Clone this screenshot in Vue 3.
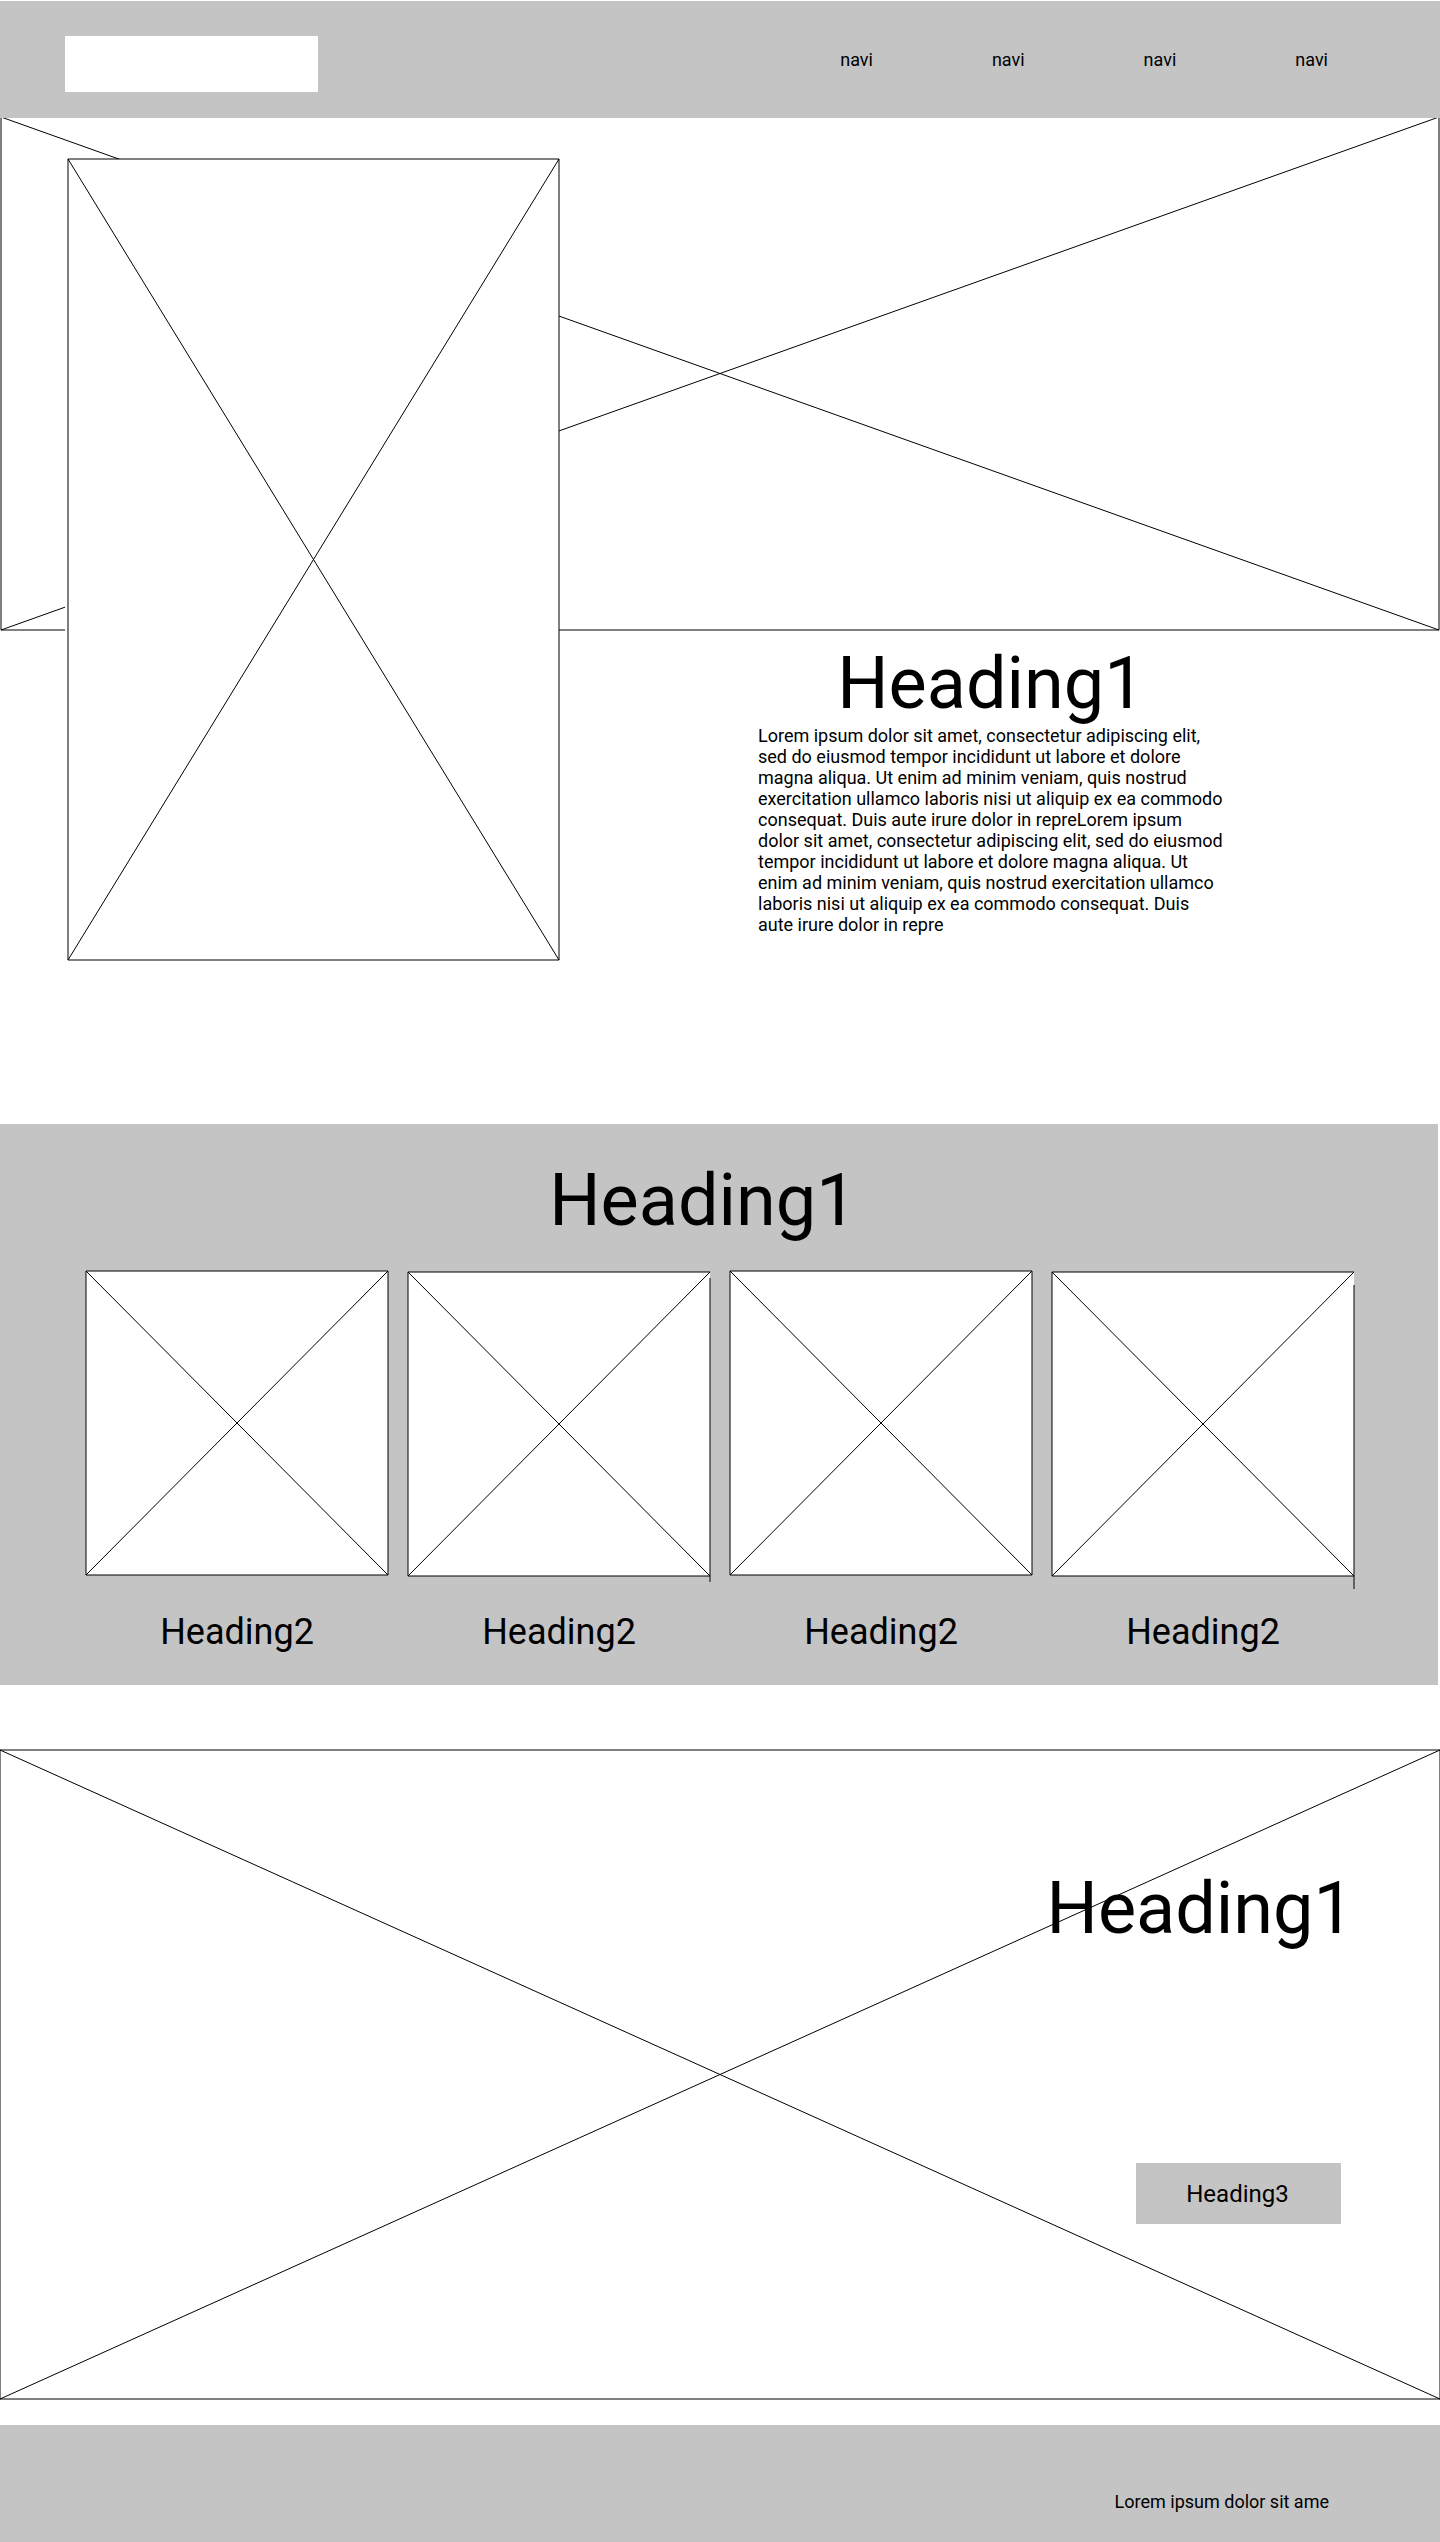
<script setup>
import { h } from 'vue'

const navItems = ['navi', 'navi', 'navi', 'navi']

// shift: vertical offset of the whole drawing; edge: offset of its right side
const tiles = [
  { label: 'Heading2', shift: 0, edge: 0 },
  { label: 'Heading2', shift: 1, edge: 7 },
  { label: 'Heading2', shift: 0, edge: 0 },
  { label: 'Heading2', shift: 1, edge: 14 },
]

const intro =
  'Lorem ipsum dolor sit amet, consectetur adipiscing elit, sed do eiusmod tempor incididunt ut labore et dolore magna aliqua. Ut enim ad minim veniam, quis nostrud exercitation ullamco laboris nisi ut aliquip ex ea commodo consequat. Duis aute irure dolor in repreLorem ipsum dolor sit amet, consectetur adipiscing elit, sed do eiusmod tempor incididunt ut labore et dolore magna aliqua. Ut enim ad minim veniam, quis nostrud exercitation ullamco laboris nisi ut aliquip ex ea commodo consequat. Duis aute irure dolor in repre'

const line = (x1, y1, x2, y2) => h('line', { x1, y1, x2, y2 })

// Crossed image placeholder that stretches to the size of its box
const CrossFrame = (props) =>
  h('svg', { width: '100%', height: '100%', overflow: 'visible', stroke: '#000', 'aria-hidden': 'true' }, [
    h('svg', { y: props.shift, width: '100%', height: '100%', overflow: 'visible' }, [
      h('rect', { width: '100%', height: '100%', fill: '#fff', stroke: 'none' }),
      line('0', '0', '100%', '0'),
      line('0', '100%', '100%', '100%'),
      line('0', '0', '0', '100%'),
      line('0', '0', '100%', '100%'),
      line('100%', '0', '0', '100%'),
    ]),
    h('svg', { y: props.edge, width: '100%', height: '100%', overflow: 'visible' }, [
      line('100%', '0', '100%', '100%'),
    ]),
  ])
CrossFrame.props = { shift: { default: 0 }, edge: { default: 0 } }
</script>

<template>
  <div class="page">
    <header class="header">
      <div class="logo"></div>
      <nav class="nav">
        <a v-for="(item, i) in navItems" :key="i" href="#">{{ item }}</a>
      </nav>
    </header>

    <main>
      <section class="hero">
        <div class="hero-backdrop"><CrossFrame /></div>
        <div class="hero-card"><CrossFrame /></div>
        <div class="hero-text">
          <h1>Heading1</h1>
          <p>{{ intro }}</p>
        </div>
      </section>

      <section class="gallery">
        <h1>Heading1</h1>
        <div class="tiles">
          <article v-for="(tile, i) in tiles" :key="i" class="tile">
            <div class="tile-image"><CrossFrame :shift="tile.shift" :edge="tile.edge" /></div>
            <h2>{{ tile.label }}</h2>
          </article>
        </div>
      </section>

      <section class="banner">
        <div class="banner-image"><CrossFrame /></div>
        <div class="banner-content">
          <h1>Heading1</h1>
          <button type="button">Heading3</button>
        </div>
      </section>
    </main>

    <footer class="footer">
      <p>Lorem ipsum dolor sit ame</p>
    </footer>
  </div>
</template>

<style>
body {
  margin: 0;
  background: #fff;
}
</style>

<style scoped>
.page {
  overflow: hidden;
  padding-top: 1px;
  color: #000;
  font-family: Roboto, sans-serif;
  font-size: 18px;
  line-height: 21px;
}

.page :deep(svg) {
  display: block;
}

h1,
h2,
p {
  margin: 0;
  font-weight: 400;
}

h1 {
  font-size: 72px;
  line-height: 84px;
}

h2 {
  font-size: 36px;
  line-height: 42px;
}

.header {
  position: relative;
  z-index: 1;
  display: flex;
  justify-content: space-between;
  align-items: flex-start;
  padding: 35px 112px 26px 65px;
  background: #c4c4c4;
}

.logo {
  width: 253px;
  height: 56px;
  background: #fff;
}

.nav {
  display: flex;
  gap: 119px;
  padding-top: 13px;
}

.nav a {
  color: inherit;
  text-decoration: none;
}

.hero {
  display: grid;
  grid-template-columns: 65px 494fr 199fr 466fr 216fr;
  grid-template-rows: 513px auto;
  margin-top: -1px;
  padding-bottom: 164px;
}

.hero-backdrop {
  grid-area: 1 / 1 / 2 / -1;
  margin: 0 1px;
}

.hero-card {
  grid-area: 1 / 2 / 3 / 3;
  height: 801px;
  margin-top: 42px;
  padding-left: 3px;
  background: #fff;
}

.hero-text {
  grid-area: 2 / 4 / 3 / 5;
  padding-top: 12px;
}

.hero-text h1 {
  margin-bottom: -1px;
  text-align: center;
}

.gallery {
  margin-right: 2px;
  padding: 35px 84px 32px 86px;
  background: #c4c4c4;
}

.gallery > h1 {
  padding-right: 34px;
  text-align: center;
}

.tiles {
  display: grid;
  grid-template-columns: repeat(4, 1fr);
  gap: 20px;
  margin-top: 28px;
}

.tile-image {
  height: 304px;
}

.tile h2 {
  margin-top: 36px;
  text-align: center;
}

.banner {
  display: grid;
  margin-top: 65px;
}

.banner-image,
.banner-content {
  grid-area: 1 / 1;
}

.banner-content {
  position: relative;
  display: flex;
  flex-direction: column;
  align-items: flex-end;
  gap: 212px;
  padding: 117px 86px 175px 0;
}

.banner-content button {
  width: 205px;
  height: 61px;
  margin-right: 13px;
  padding: 0 2px 0 0;
  border: 0;
  border-radius: 0;
  background: #c4c4c4;
  color: inherit;
  font-family: inherit;
  font-size: 24px;
  line-height: 28px;
}

.footer {
  margin-top: 26px;
  padding: 66px 111px 30px;
  background: #c4c4c4;
  text-align: right;
}
</style>
